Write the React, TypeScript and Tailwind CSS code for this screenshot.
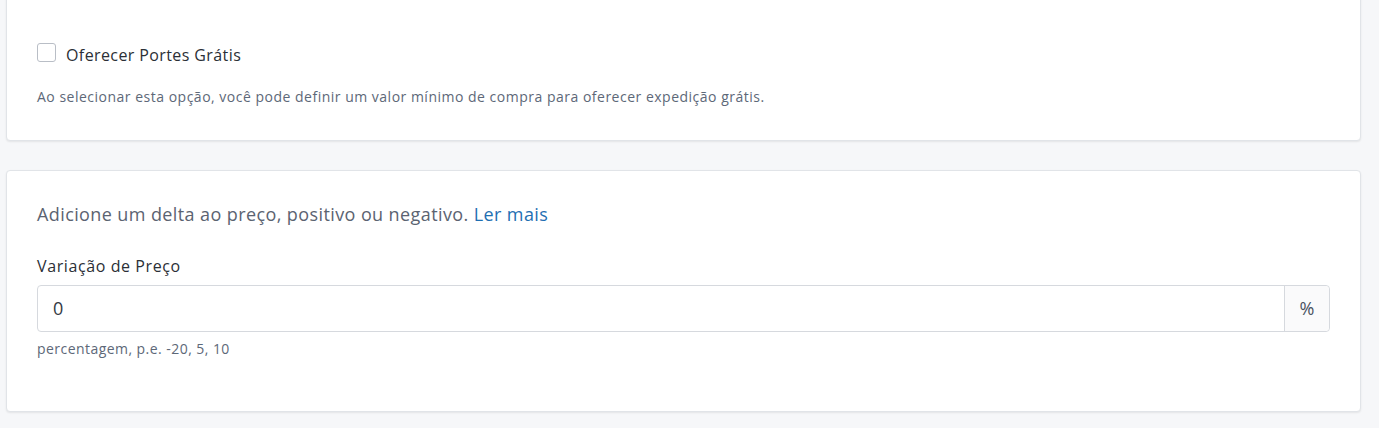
const App = () => {
  return (
    <main className="min-h-screen bg-[#f6f7f9] pl-[6px] pr-[18px] pb-[17px] font-['Open_Sans',sans-serif]">
      <section className="-mt-[6px] rounded-[4px] border border-[#e1e4e8] bg-white px-[30px] pt-[48px] pb-[33px] shadow-[0_1px_2px_rgba(0,0,0,0.08)]">
        <label className="flex items-start gap-[10px]">
          <span className="h-[19px] w-[19px] shrink-0 rounded-[3px] border border-[#b9bec6] bg-white" />
          <span className="mt-[2px] text-[16px] leading-[20px] tracking-[0.4px] text-[#2b2f36]">
            Oferecer Portes Grátis
          </span>
        </label>
        <p className="mt-[22px] text-[14px] leading-[20px] tracking-[0.5px] text-[#5d6878]">
          Ao selecionar esta opção, você pode definir um valor mínimo de compra para oferecer expedição grátis.
        </p>
      </section>

      <section className="mt-[29px] rounded-[4px] border border-[#e1e4e8] bg-white px-[30px] pt-[30px] pb-[52px] shadow-[0_1px_2px_rgba(0,0,0,0.08)]">
        <p className="text-[18px] leading-[26px] tracking-[0.4px] text-[#5b6371]">
          Adicione um delta ao preço, positivo ou negativo.{" "}
          <a href="#" className="text-[#1f6fb2]">Ler mais</a>
        </p>
        <div className="mt-[28px] text-[16px] leading-[22px] tracking-[0.6px] text-[#2b2f36]">
          Variação de Preço
        </div>
        <div className="mt-[8px] flex h-[47px] rounded-[4px] border border-[#d6d9de]">
          <input
            defaultValue="0"
            className="min-w-0 flex-1 bg-transparent px-[15px] text-[18px] text-[#333a44] outline-none"
          />
          <span className="flex w-[45px] items-center justify-center rounded-r-[4px] border-l border-[#d6d9de] bg-[#fafafb] text-[18px] text-[#4a5261]">
            %
          </span>
        </div>
        <p className="mt-[7px] text-[14px] leading-[20px] tracking-[0.45px] text-[#5d6878]">
          percentagem, p.e. -20, 5, 10
        </p>
      </section>
    </main>
  );
};

export default App;
